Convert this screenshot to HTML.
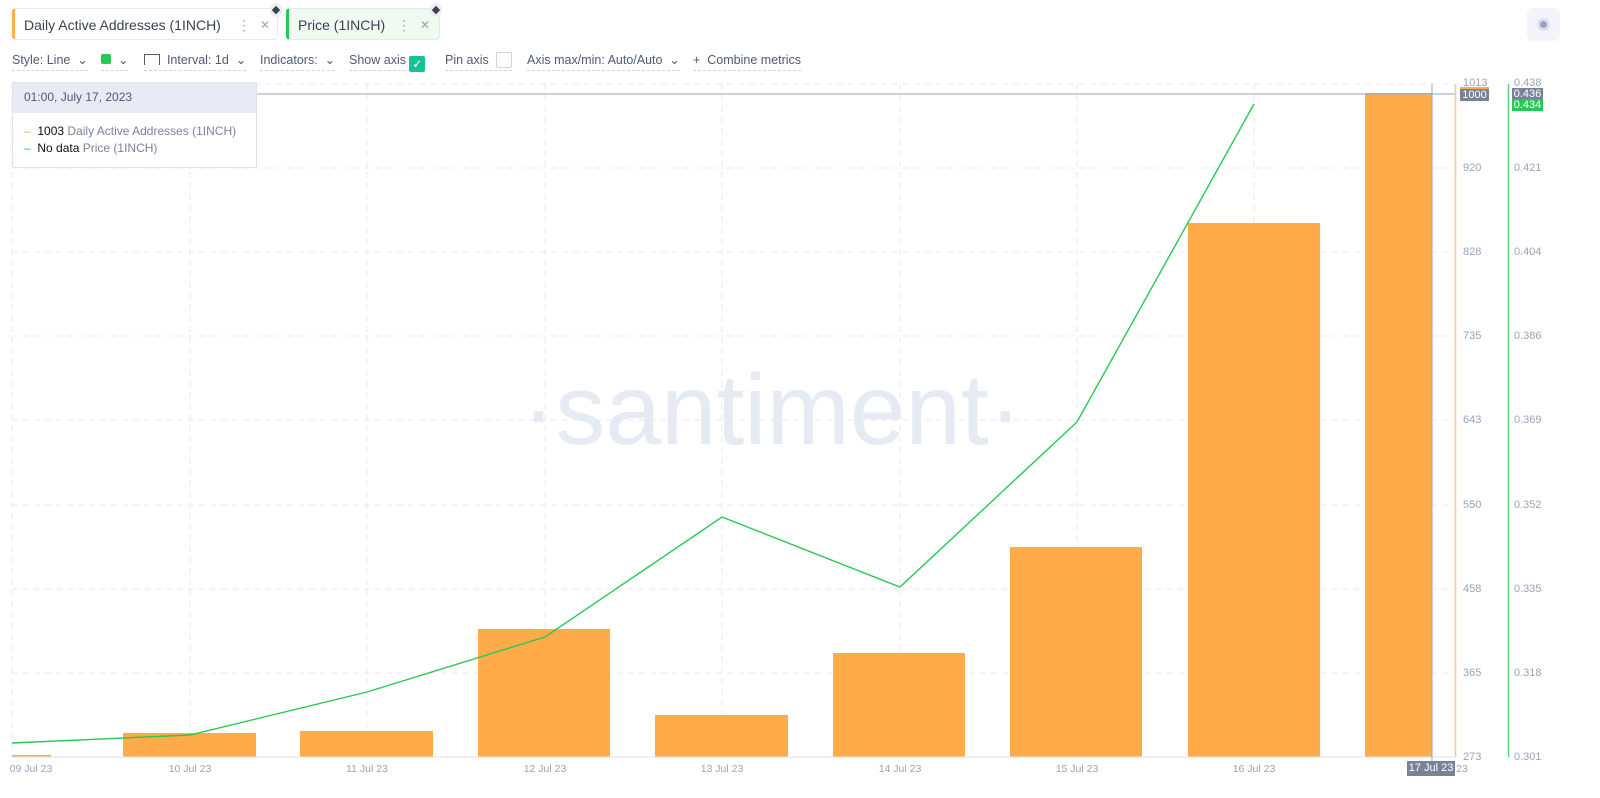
<!DOCTYPE html>
<html><head><meta charset="utf-8"><style>
body{margin:0;width:1600px;height:798px;background:#fff;font-family:"Liberation Sans",sans-serif;overflow:hidden;position:relative;color:#3a4154}
.tab{position:absolute;top:8px;height:32px;border:1px solid #e5e8f0;border-radius:4px;font-size:14px;line-height:32px;box-sizing:border-box}
.tb{position:absolute;top:52px;height:18px;line-height:16px;font-size:12.5px;color:#505a70;border-bottom:1px dashed #d0d5e0}
.ax{position:absolute;font-size:11px;color:#9aa3b8}
.xl{position:absolute;top:763px;font-size:10.5px;color:#9aa3b8;transform:translateX(-50%)}
</style></head><body>
<div class="tab" style="left:12px;width:266px;border-left:3px solid #ffad4d;padding-left:9px">Daily Active Addresses (1INCH)<span style="position:absolute;left:222px;color:#9aa3b8">⋮</span><span style="position:absolute;left:245px;color:#9aa3b8;font-size:12px">✕</span></div>
<div style="position:absolute;left:270px;top:3px;width:12px;height:14px;border-radius:7px;background:#eee;font-size:11px;line-height:14px;text-align:center">◆</div>
<div class="tab" style="left:286px;width:154px;border-left:3px solid #26c953;background:#effbf1;padding-left:9px">Price (1INCH)<span style="position:absolute;left:108px;color:#9aa3b8">⋮</span><span style="position:absolute;left:131px;color:#9aa3b8;font-size:12px">✕</span></div>
<div style="position:absolute;left:430px;top:3px;width:12px;height:14px;border-radius:7px;background:#eee;font-size:11px;line-height:14px;text-align:center">◆</div>
<div style="position:absolute;left:1527px;top:8px;width:33px;height:33px;background:#f4f5fa;border-radius:6px"><div style="position:absolute;left:10px;top:10px;width:13px;height:13px;border-radius:50%;background:#dde1ec"></div><div style="position:absolute;left:13px;top:13px;width:7px;height:7px;border-radius:50%;background:#9aa3b8"></div></div>

<div class="tb" style="left:12px">Style: Line &nbsp;⌄</div>
<div class="tb" style="left:101px"><span style="display:inline-block;width:10px;height:10px;background:#26c953;border-radius:2px"></span> &nbsp;⌄</div>
<div class="tb" style="left:144px"><span style="display:inline-block;width:14px;height:10px;border:1px solid #505a70;border-bottom:none;vertical-align:-1px"></span> &nbsp;Interval: 1d &nbsp;⌄</div>
<div class="tb" style="left:260px">Indicators: &nbsp;⌄</div>
<div class="tb" style="left:349px">Show axis <span style="display:inline-block;width:16px;height:16px;background:#14c393;border-radius:2px;color:#fff;text-align:center;line-height:16px;font-size:12px;vertical-align:-4px">✓</span></div>
<div class="tb" style="left:445px">Pin axis <span style="display:inline-block;width:14px;height:14px;border:1px solid #d0d5e0;border-radius:2px;vertical-align:-4px;margin-left:4px"></span></div>
<div class="tb" style="left:527px">Axis max/min: Auto/Auto &nbsp;⌄</div>
<div class="tb" style="left:693px">+ &nbsp;Combine metrics</div>

<svg style="position:absolute;left:0;top:0" width="1600" height="798">
<g stroke="#e8eaf1" stroke-dasharray="6,5" stroke-width="1">
<line x1="12" y1="84" x2="1455" y2="84"/><line x1="12" y1="168" x2="1455" y2="168"/><line x1="12" y1="252" x2="1455" y2="252"/><line x1="12" y1="336" x2="1455" y2="336"/><line x1="12" y1="420" x2="1455" y2="420"/><line x1="12" y1="505" x2="1455" y2="505"/><line x1="12" y1="589" x2="1455" y2="589"/><line x1="12" y1="673" x2="1455" y2="673"/>
<line x1="12" y1="84" x2="12" y2="757"/><line x1="190" y1="84" x2="190" y2="757"/><line x1="367" y1="84" x2="367" y2="757"/><line x1="545" y1="84" x2="545" y2="757"/><line x1="722" y1="84" x2="722" y2="757"/><line x1="900" y1="84" x2="900" y2="757"/><line x1="1077" y1="84" x2="1077" y2="757"/><line x1="1254" y1="84" x2="1254" y2="757"/>
</g>
<text x="772" y="444" text-anchor="middle" font-family="Liberation Sans" font-size="100" fill="#e6eaf3">·santiment·</text>
<g fill="#ffab4a">
<rect x="12" y="755" width="39" height="2"/><rect x="123" y="733" width="133" height="24"/><rect x="300" y="731" width="133" height="26"/><rect x="478" y="629" width="132" height="128"/><rect x="655" y="715" width="133" height="42"/><rect x="833" y="653" width="132" height="104"/><rect x="1010" y="547" width="132" height="210"/><rect x="1188" y="223" width="132" height="534"/><rect x="1365" y="93" width="67" height="664"/>
</g>
<line x1="12" y1="757" x2="1455" y2="757" stroke="#dfe2ec"/>
<polyline points="12,743 190,735 367,692 545,637 722,517 900,587 1077,422 1254,104" fill="none" stroke="#26c953" stroke-width="1.4"/>
<line x1="12" y1="94" x2="1455" y2="94" stroke="#9ba6c4"/>
<line x1="1432" y1="84" x2="1432" y2="764" stroke="#9ba6c4"/>
<line x1="1455.5" y1="84" x2="1455.5" y2="757" stroke="#ffc78a" stroke-width="1.5"/>
<line x1="1508.5" y1="84" x2="1508.5" y2="757" stroke="#5fd07c" stroke-width="1.5"/>
</svg>

<div class="ax" style="left:1463px;top:77px">1013</div>
<div style="position:absolute;left:1460px;top:87px;width:29px;height:14px;background:#7a8299;border-top:2px solid #ffab4a;color:#fff;font-size:11px;text-align:center;line-height:13px;box-sizing:border-box">1000</div>
<div class="ax" style="left:1463px;top:162px">920</div><div class="ax" style="left:1463px;top:246px">828</div><div class="ax" style="left:1463px;top:330px">735</div><div class="ax" style="left:1463px;top:414px">643</div><div class="ax" style="left:1463px;top:499px">550</div><div class="ax" style="left:1463px;top:583px">458</div><div class="ax" style="left:1463px;top:667px">365</div><div class="ax" style="left:1463px;top:751px">273</div>
<div class="ax" style="left:1514px;top:77px">0.438</div>
<div style="position:absolute;left:1512px;top:88px;width:31px;height:12px;background:#7a8299;color:#fff;font-size:11px;text-align:center;line-height:12px">0.436</div>
<div style="position:absolute;left:1512px;top:99px;width:31px;height:12px;background:#26c953;color:#fff;font-size:11px;text-align:center;line-height:12px">0.434</div>
<div class="ax" style="left:1514px;top:162px">0.421</div><div class="ax" style="left:1514px;top:246px">0.404</div><div class="ax" style="left:1514px;top:330px">0.386</div><div class="ax" style="left:1514px;top:414px">0.369</div><div class="ax" style="left:1514px;top:499px">0.352</div><div class="ax" style="left:1514px;top:583px">0.335</div><div class="ax" style="left:1514px;top:667px">0.318</div><div class="ax" style="left:1514px;top:751px">0.301</div>

<div class="xl" style="left:31px">09 Jul 23</div><div class="xl" style="left:190px">10 Jul 23</div><div class="xl" style="left:367px">11 Jul 23</div><div class="xl" style="left:545px">12 Jul 23</div><div class="xl" style="left:722px">13 Jul 23</div><div class="xl" style="left:900px">14 Jul 23</div><div class="xl" style="left:1077px">15 Jul 23</div><div class="xl" style="left:1254px">16 Jul 23</div><div class="xl" style="left:1462px">23</div>
<div style="position:absolute;left:1407px;top:761px;width:48px;height:15px;background:#7a8299;color:#fff;font-size:11px;text-align:center;line-height:15px">17 Jul 23</div>

<div style="position:absolute;left:12px;top:82px;width:245px;height:86px;border:1px solid #dfe2ec;background:#fff;box-sizing:border-box">
<div style="height:30px;background:#e8ebf4;font-size:12px;color:#505a70;line-height:28px;padding-left:11px">01:00, July 17, 2023</div>
<div style="font-size:12px;padding:10px 0 0 11px;line-height:17px"><span style="color:#ffab4a">–</span>&nbsp; <span style="color:#111">1003</span> <span style="color:#7a8299">Daily Active Addresses (1INCH)</span><br><span style="color:#26c953">–</span>&nbsp; <span style="color:#111">No data</span> <span style="color:#7a8299">Price (1INCH)</span></div>
</div>
</body></html>
